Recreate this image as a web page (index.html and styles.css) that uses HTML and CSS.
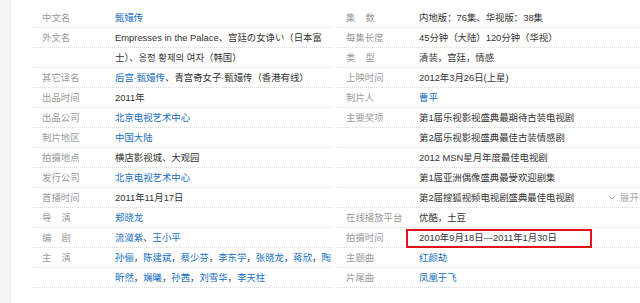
FILE: index.html
```html
<!DOCTYPE html>
<html lang="zh-CN">
<head>
<meta charset="utf-8">
<title>甄嬛传 基本信息</title>
<link rel="stylesheet" href="styles.css">
</head>
<body>
<div class="page">
  <div class="side"></div>
  <div class="info">
    <dl class="col col-left">
      <div class="row"><dt>中文名</dt><dd><a>甄嬛传</a></dd></div>
      <div class="row"><dt>外文名</dt><dd>Empresses in the Palace、宫廷の女诤い（日本富</dd></div>
      <div class="row"><dt></dt><dd>士）、옹정 황제의 여자（韩国）</dd></div>
      <div class="row"><dt>其它译名</dt><dd><a>后宫·甄嬛传</a>、青宫奇女子·甄嬛传（香港有线）</dd></div>
      <div class="row"><dt>出品时间</dt><dd>2011年</dd></div>
      <div class="row"><dt>出品公司</dt><dd><a>北京电视艺术中心</a></dd></div>
      <div class="row"><dt>制片地区</dt><dd><a>中国大陆</a></dd></div>
      <div class="row"><dt>拍摄地点</dt><dd>横店影视城、大观园</dd></div>
      <div class="row"><dt>发行公司</dt><dd><a>北京电视艺术中心</a></dd></div>
      <div class="row"><dt>首播时间</dt><dd>2011年11月17日</dd></div>
      <div class="row"><dt class="spaced">导演</dt><dd><a>郑晓龙</a></dd></div>
      <div class="row"><dt class="spaced">编剧</dt><dd><a>流潋紫</a>、<a>王小平</a></dd></div>
      <div class="row"><dt class="spaced">主演</dt><dd><a>孙俪</a>，<a>陈建斌</a>，<a>蔡少芬</a>，<a>李东学</a>，<a>张晓龙</a>，<a>蒋欣</a>，<a>陶</a></dd></div>
      <div class="row"><dt></dt><dd><a>昕然</a>，<a>斓曦</a>，<a>孙茜</a>，<a>刘雪华</a>，<a>李天柱</a></dd></div>
    </dl>
    <dl class="col col-right">
      <div class="row"><dt class="spaced">集数</dt><dd>内地版：76集、华视版：38集</dd></div>
      <div class="row"><dt>每集长度</dt><dd>45分钟（大陆）120分钟（华视）</dd></div>
      <div class="row"><dt class="spaced">类型</dt><dd>清装，宫廷，情感</dd></div>
      <div class="row"><dt>上映时间</dt><dd>2012年3月26日(上星)</dd></div>
      <div class="row"><dt>制片人</dt><dd><a>曹平</a></dd></div>
      <div class="row"><dt>主要奖项</dt><dd>第1届乐视影视盛典最期待古装电视剧</dd></div>
      <div class="row"><dt></dt><dd>第2届乐视影视盛典最佳古装情感剧</dd></div>
      <div class="row"><dt></dt><dd>2012 MSN星月年度最佳电视剧</dd></div>
      <div class="row"><dt></dt><dd>第1届亚洲偶像盛典最受欢迎剧集</dd></div>
      <div class="row"><dt></dt><dd>第2届搜狐视频电视剧盛典最佳电视剧</dd>
        <span class="expand"><svg class="chev" width="8" height="5" viewBox="0 0 8 5"><path d="M0.5 0.5 L4 4 L7.5 0.5" fill="none" stroke="#b5b5b5" stroke-width="1"/></svg>展开</span>
      </div>
      <div class="row"><dt>在线播放平台</dt><dd>优酷，土豆</dd></div>
      <div class="row"><dt>拍摄时间</dt><dd class="marked">2010年9月18日—2011年1月30日<span class="redbox"></span></dd></div>
      <div class="row"><dt>主题曲</dt><dd><a>红颜劫</a></dd></div>
      <div class="row"><dt>片尾曲</dt><dd><a>凤凰于飞</a></dd></div>
    </dl>
  </div>
</div>
</body>
</html>
```

FILE: styles.css
```css
html, body {
  margin: 0;
  padding: 0;
  background: #fff;
}

body {
  font-family: "Liberation Sans", "Noto Sans CJK SC", sans-serif;
  font-size: 9.4px;
  color: #333;
  overflow: hidden;
  width: 640px;
  height: 303px;
}

.page {
  display: flex;
  height: 303px;
}

.side {
  width: 10px;
  flex: none;
  background: #f5f5f5;
  border-right: 1px solid #ececec;
}

.info {
  display: flex;
  gap: 4px;
  padding: 8px 0 0 22px;
  flex: none;
}

.col {
  margin: 0;
  width: 300px;
  flex: none;
}

.col-right {
  width: 310px;
}

.row {
  display: flex;
  height: 19px;
  line-height: 19px;
  border-bottom: 1px dotted #dcdcdc;
  position: relative;
  white-space: nowrap;
}

dt {
  width: 73px;
  padding-left: 9px;
  flex: none;
  color: #999;
}

dt.spaced {
  letter-spacing: 10px;
}

dd {
  margin: 0;
  flex: none;
  overflow: visible;
}

a {
  color: #136ec2;
  text-decoration: none;
}

.marked {
  position: relative;
}

.redbox {
  position: absolute;
  left: -13px;
  top: 1px;
  width: 182px;
  height: 15px;
  border: 2px solid #e5141a;
}

.expand {
  position: absolute;
  left: 271px;
  top: 0;
  color: #aaa;
  display: flex;
  align-items: center;
  gap: 4px;
}

.chev {
  display: block;
}
```
